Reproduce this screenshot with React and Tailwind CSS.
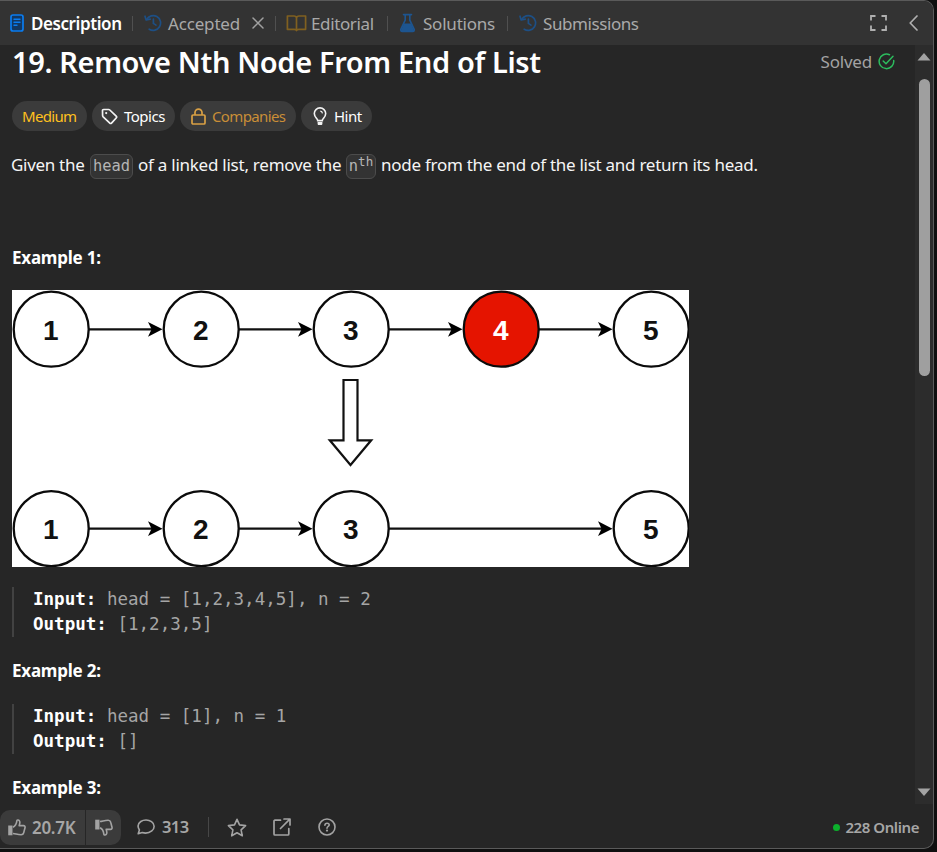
const GRAY = "#a3a3a3";

function HistoryIcon() {
  return (
    <svg width="18" height="18" viewBox="0 0 18 18" fill="none" stroke="#1d4f85" strokeWidth="1.7" strokeLinecap="round" strokeLinejoin="round">
      <path d="M2.7 5.4A7.4 7.4 0 1 1 5.2 15.2" />
      <path d="M1 2.2 2.2 6l4-.9" />
      <path d="M9.4 5.2v4.2l2.6 1.7" />
    </svg>
  );
}

function Separator() {
  return <div className="h-[15px] w-px shrink-0 bg-[#505050]" />;
}

function TopBar() {
  return (
    <div className="flex h-[44px] shrink-0 items-center bg-[#333333] pl-[10px] text-[17px] leading-none text-[#a9a9a9]">
      <svg className="mr-[7px] shrink-0" width="14" height="18" viewBox="0 0 14 18" fill="none" stroke="#0a7cf0" strokeWidth="1.7" strokeLinecap="round">
        <rect x="1" y="1" width="12" height="16" rx="2" fill="#123761" />
        <path d="M4 5.3h6M4 8.3h6M4 11.3h3" strokeWidth="1.4" />
      </svg>
      <div className="w-[101px] whitespace-nowrap font-semibold tracking-[-0.42px] text-white">Description</div>
      <Separator />
      <div className="ml-[11px] mr-[6px] shrink-0"><HistoryIcon /></div>
      <div className="w-[84px] whitespace-nowrap tracking-[-0.17px]">Accepted</div>
      <svg className="mr-[11px] shrink-0" width="12" height="12" viewBox="0 0 12 12" stroke="#a0a0a0" strokeWidth="1.5" strokeLinecap="round">
        <path d="M1 1l10 10M11 1 1 11" />
      </svg>
      <Separator />
      <svg className="ml-[10px] mr-[4px] shrink-0" width="21" height="17" viewBox="0 0 21 17" fill="none" stroke="#806020" strokeWidth="1.7" strokeLinejoin="round">
        <path d="M10.500 2.600C10 1.500 9.300 1 8 1H1.400v13.300h6.800c1.200 0 2 .4 2.300 1.200.3-.8 1.100-1.200 2.300-1.200h6.800V1H13c-1.300 0-2 .5-2.500 1.600zM10.500 2.600v13" />
      </svg>
      <div className="w-[76px] whitespace-nowrap tracking-[-0.37px]">Editorial</div>
      <Separator />
      <svg className="ml-[11px] mr-[6px] shrink-0" width="18" height="20" viewBox="0 0 18 20">
        <path d="M4.500 1.600h8M6.200 2v5.200L1.900 16.200c-.6 1.300.1 2.300 1.400 2.300h10.400c1.300 0 2-1 1.400-2.300L10.800 7.200V2" fill="none" stroke="#1d5590" strokeWidth="1.600" strokeLinecap="round" strokeLinejoin="round" />
        <path d="M5 10.500h7l3.300 7.500H1.700z" fill="#1d5590" />
      </svg>
      <div className="w-[84px] whitespace-nowrap tracking-[-0.22px]">Solutions</div>
      <Separator />
      <div className="ml-[11px] mr-[6px] shrink-0"><HistoryIcon /></div>
      <div className="whitespace-nowrap tracking-[-0.42px]">Submissions</div>
      <svg className="ml-auto mr-[22px] shrink-0" width="17" height="16" viewBox="0 0 17 16" fill="none" stroke="#b0b0b0" strokeWidth="1.800">
        <path d="M1 5.500V1h4.500M11.500 1H16v4.500M16 10.500V15h-4.500M5.500 15H1v-4.500" />
      </svg>
      <svg className="mr-[15px] shrink-0" width="9" height="16" viewBox="0 0 9 16" fill="none" stroke="#b0b0b0" strokeWidth="1.700" strokeLinecap="round" strokeLinejoin="round">
        <path d="M8 1 1.200 8 8 15" />
      </svg>
    </div>
  );
}

const chip = "flex h-[30px] items-center whitespace-nowrap rounded-full bg-[#3b3b3b] text-[15px] leading-none";

function Chips() {
  return (
    <div className="mt-[20px] flex gap-[5px]">
      <div className={`${chip} w-[75px] pl-[10px] tracking-[-0.69px] text-[#ffc01e]`}>Medium</div>
      <div className={`${chip} w-[83px] gap-[6px] pl-[9px] tracking-[-0.5px] text-white`}>
        <svg width="17" height="17" viewBox="0 0 17 17" fill="none" stroke="#f2f2f2" strokeWidth="1.700" strokeLinejoin="round">
          <path d="M1.500 2.600c0-.7.4-1.100 1.100-1.100h5c.5 0 .9.200 1.200.5l6.400 6.200c.6.600.6 1.200 0 1.800l-4.700 5.100c-.5.500-1.200.500-1.700 0L2.200 8.900c-.4-.4-.6-.8-.6-1.300z" />
          <circle cx="5.200" cy="5.100" r="1.100" fill="#f2f2f2" stroke="none" />
        </svg>
        Topics
      </div>
      <div className={`${chip} w-[116px] gap-[6px] pl-[11px] tracking-[-0.62px] text-[#c98e37]`}>
        <svg width="15" height="17" viewBox="0 0 15 17" fill="none" stroke="#d9a044" strokeWidth="1.700">
          <rect x="1" y="7" width="13" height="9" rx="1" />
          <path d="M4 7V4.600a3.500 3.500 0 0 1 7 0V7" />
        </svg>
        Companies
      </div>
      <div className={`${chip} w-[71px] gap-[7px] pl-[12px] tracking-[-0.5px] text-white`}>
        <svg width="14" height="19" viewBox="0 0 14 19" fill="none" stroke="#f2f2f2" strokeWidth="1.600">
          <path d="M4.700 13.600c0-1.900-3.400-3.200-3.400-7a5.700 5.700 0 0 1 11.400 0c0 3.800-3.400 5.100-3.400 7z" />
          <path d="M7.300 4.200c1.200.1 2 .9 2.200 2.100" strokeWidth="1.200" />
          <path d="M4.600 15h4.800v1.800c0 .8-.6 1.200-1.200 1.200H5.800c-.6 0-1.200-.4-1.200-1.200z" fill="#f2f2f2" stroke="none" />
        </svg>
        Hint
      </div>
    </div>
  );
}

const code = "flex h-[25px] items-center justify-center rounded-[6px] border border-[#4c4c4c] bg-[#333333] font-['DejaVu_Sans_Mono',monospace] text-[15.4px] leading-none text-[#b5b5b5]";

function Statement() {
  return (
    <div className="mt-[19px] flex h-[28px] items-center whitespace-nowrap text-[17px] leading-none text-[#f5f5f5]">
      <span className="-ml-px w-[79px] tracking-[-0.3px]">Given the</span>
      <code className={`${code} mt-[5px] w-[43px] pt-px`}>head</code>
      <span className="ml-[5px] w-[208px] tracking-[-0.25px]">of a linked list, remove the</span>
      <code className={`${code} mt-[5px] w-[30px]`}>
        n<sup className="-top-[5px] text-[12.500px]">th</sup>
      </code>
      <span className="ml-[5px] tracking-[-0.27px]">node from the end of the list and return its head.</span>
    </div>
  );
}

function Link({ from, to, y }) {
  return (
    <g>
      <path d={`M${from + 38} ${y}H${to - 48}`} stroke="#111" strokeWidth="2.200" />
      <path d={`M${to - 38.500} ${y}l-14.500 7.400 3.600-7.400-3.600-7.400z`} fill="#000" />
    </g>
  );
}

function Node({ x, y, value, removed }) {
  return (
    <g>
      <circle cx={x} cy={y} r="37.500" fill={removed ? "#e51400" : "#fff"} stroke="#0b0b0b" strokeWidth="2.300" />
      <text x={x - 0.5} y={y + 10.300} textAnchor="middle" fontSize="28" fontWeight="700" fill={removed ? "#fff" : "#111"}>
        {value}
      </text>
    </g>
  );
}

function Diagram() {
  return (
    <svg className="block shrink-0 bg-white font-['Liberation_Sans',Arial,sans-serif]" width="677" height="277" viewBox="0 0 677 277">
      <Link from={39} to={189} y={39.3} />
      <Link from={189} to={339} y={39.3} />
      <Link from={339} to={489} y={39.3} />
      <Link from={489} to={639} y={39.3} />
      <Link from={39} to={189} y={238.7} />
      <Link from={189} to={339} y={238.7} />
      <Link from={339} to={639} y={238.7} />
      <Node x={39.2} y={39.2} value="1" />
      <Node x={189.2} y={39.2} value="2" />
      <Node x={339.2} y={39.2} value="3" />
      <Node x={489.2} y={39.2} value="4" removed />
      <Node x={639.2} y={39.2} value="5" />
      <Node x={39.2} y={238.6} value="1" />
      <Node x={189.2} y={238.6} value="2" />
      <Node x={339.2} y={238.6} value="3" />
      <Node x={639.2} y={238.6} value="5" />
      <path d="M331.500 90h14v60.300h13.700L338.500 175l-20.700-24.700h13.700z" fill="#fff" stroke="#111" strokeWidth="2.200" />
    </svg>
  );
}

function Heading({ children }) {
  return <div className="flex h-[26px] shrink-0 items-center whitespace-nowrap pb-[2px] text-[17px] font-bold leading-none tracking-[-0.22px] text-white">{children}</div>;
}

function Sample({ input, output }) {
  return (
    <pre className="h-[50px] shrink-0 border-l-2 border-[#424242] pl-[19px] font-['DejaVu_Sans_Mono',monospace] text-[17.540px] leading-[25px] text-[#a5a5a5]">
      <b className="text-white">Input:</b> {input}{"\n"}
      <b className="text-white">Output:</b> {output}
    </pre>
  );
}

function Scrollbar() {
  return (
    <div className="flex w-[18px] shrink-0 flex-col items-center bg-[#2c2c2c]">
      <svg className="mt-[8px]" width="14" height="8" viewBox="0 0 14 8"><path d="M7 0l6.500 7.500H.5z" fill="#a3a3a3" /></svg>
      <div className="mt-[18px] h-[297px] w-[11px] rounded-full bg-[#9f9f9f]" />
      <svg className="mb-[8px] mt-auto" width="14" height="8" viewBox="0 0 14 8"><path d="M7 8 .5.5h13z" fill="#a3a3a3" /></svg>
    </div>
  );
}

function Thumb() {
  return (
    <svg width="18" height="17" viewBox="0 0 18 17" fill="none" stroke={GRAY} strokeWidth="1.600" strokeLinejoin="round">
      <path d="M.2 6.500h4.300v9.800H.2z" fill={GRAY} stroke="none" />
      <path d="M5 8.300C7.200 7.200 8.500 5 8.800 2.200c.1-1 .6-1.300 1.300-1.200 1.500.3 2 1.900 1.600 3.500l-.5 2.100h4.200c1.300 0 1.900 1 1.600 2.200l-1.300 5c-.3 1.300-1.200 2-2.600 2-3.700 0-5.200-1-8.100-1.300" />
    </svg>
  );
}

function Footer() {
  return (
    <div className="flex h-[44px] shrink-0 items-center pt-[2px] text-[17px] font-semibold leading-none text-[#a6a6a6]">
      <div className="flex h-[35px] w-[85px] items-center gap-[6px] rounded-l-[10px] bg-[#3b3b3b] pl-[8px] tracking-[-0.3px]">
        <Thumb />
        20.7K
      </div>
      <div className="ml-px flex h-[35px] w-[35px] items-center rounded-r-[10px] bg-[#3b3b3b] pl-[9px]">
        <div className="-scale-y-100"><Thumb /></div>
      </div>
      <svg className="ml-[16px] mr-[7px]" width="18" height="16" viewBox="0 0 18 16" fill="none" stroke={GRAY} strokeWidth="1.600" strokeLinejoin="round">
        <path d="M1.200 14.800 2.400 11C.4 7.800 1 4.500 3.800 2.500c3-2 7.600-2 10.700.2 3.400 2.400 3.400 6.700.3 9.200-2.800 2.200-6.400 2.600-9.600 1.700z" />
      </svg>
      <span className="w-[46px] text-[16.500px] tracking-[-0.6px]">313</span>
      <div className="h-[20px] w-px bg-[#474747]" />
      <svg className="ml-[18px]" width="20" height="19" viewBox="0 0 20 19" fill="none" stroke={GRAY} strokeWidth="1.600" strokeLinejoin="round">
        <path d="m10 1.300 2.500 5.600 6.100.7-4.500 4.200 1.200 6L10 14.800l-5.300 3 1.200-6L1.400 7.600l6.100-.7z" />
      </svg>
      <svg className="ml-[26px]" width="18" height="18" viewBox="0 0 18 18" fill="none" stroke={GRAY} strokeWidth="1.700" strokeLinecap="round" strokeLinejoin="round">
        <path d="M7.500 2.200H2c-.7 0-1 .4-1 1V16c0 .7.300 1 1 1h12.800c.6 0 1-.3 1-1v-5.500M11 1h6v6M16.800 1.200 7.500 10.500" />
      </svg>
      <svg className="ml-[27px]" width="18" height="18" viewBox="0 0 18 18" fill="none" stroke={GRAY} strokeWidth="1.600" strokeLinecap="round">
        <circle cx="9" cy="9" r="8" />
        <path d="M6.900 7.200c.1-1.300.9-2 2.200-2 1.200 0 2.100.7 2.100 1.800 0 1.400-2.200 1.500-2.200 3.200" />
        <circle cx="9" cy="12.600" r="1.100" fill={GRAY} stroke="none" />
      </svg>
      <div className="ml-auto mr-[14px] flex items-center gap-[5px] whitespace-nowrap text-[15px] tracking-[-0.43px]">
        <span className="size-[7px] rounded-full bg-[#0cb02c]" />
        228 Online
      </div>
    </div>
  );
}

export default function App() {
  return (
    <div className="h-[852px] w-[937px] overflow-hidden bg-[#0f0f0f] font-['Noto_Sans','Open_Sans',sans-serif]">
      <div className="flex h-[849px] w-[934px] flex-col overflow-hidden rounded-r-[10px] border-y border-r border-[#5a5a5a] bg-[#262626]">
        <TopBar />
        <div className="flex h-[759px] shrink-0">
          <div className="flex min-w-0 flex-1 flex-col pl-[12px]">
            <div className="flex h-[36px] shrink-0 items-center justify-between pb-[3px] pr-[20px]">
              <h1 className="whitespace-nowrap text-[29px] font-semibold leading-none tracking-[-0.365px] text-white">19. Remove Nth Node From End of List</h1>
              <div className="flex items-center gap-[6px] text-[17px] leading-none tracking-[-0.2px] text-[#a3a3a3]">
                Solved
                <svg className="-mt-[1px]" width="17" height="17" viewBox="0 0 17 17" fill="none" stroke="#2cbb5d" strokeWidth="1.500" strokeLinecap="round" strokeLinejoin="round">
                  <path d="M11.500 1.700A7.300 7.300 0 1 0 15.700 7.500" />
                  <path d="m5.200 8 2.800 2.800 7-7.500" />
                </svg>
              </div>
            </div>
            <Chips />
            <Statement />
            <div className="h-[67px] shrink-0" />
            <Heading>Example 1:</Heading>
            <div className="h-[19px] shrink-0" />
            <Diagram />
            <div className="h-[20px] shrink-0" />
            <Sample input="head = [1,2,3,4,5], n = 2" output="[1,2,3,5]" />
            <div className="h-[21px] shrink-0" />
            <Heading>Example 2:</Heading>
            <div className="h-[20px] shrink-0" />
            <Sample input="head = [1], n = 1" output="[]" />
            <div className="h-[21px] shrink-0" />
            <Heading>Example 3:</Heading>
          </div>
          <Scrollbar />
        </div>
        <Footer />
      </div>
    </div>
  );
}
